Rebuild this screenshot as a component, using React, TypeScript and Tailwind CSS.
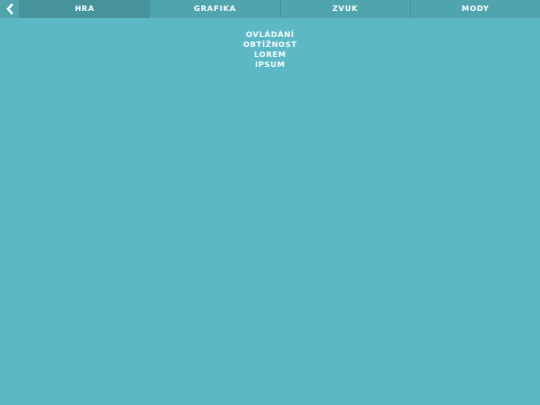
import { useState } from 'react'

const TABS = ['HRA', 'GRAFIKA', 'ZVUK', 'MODY']

const ITEMS = ['OVLÁDÁNÍ', 'OBTÍŽNOST', 'LOREM', 'IPSUM']

export default function App() {
  const [active, setActive] = useState(0)

  return (
    <div className="w-[540px] h-[405px] bg-[#5cb8c5] flex flex-col text-[#eef8fa] font-['DejaVu_Sans',sans-serif]">
      {/* Top bar */}
      <div className="flex h-[18px] bg-[#50a4ae]">
        <button className="w-[19px] flex items-center justify-center">
          <svg width="8" height="12" viewBox="0 0 8 12">
            <path d="M6.5 1 L2 6 L6.5 11" fill="none" stroke="#eef8fa" strokeWidth="2.6" strokeLinejoin="miter" />
          </svg>
        </button>
        <div className="flex-1 grid grid-cols-4">
          {TABS.map((tab, i) => (
            <button
              key={tab}
              onClick={() => setActive(i)}
              className={`flex items-center justify-center text-[7.5px] font-bold tracking-[0.7px] border-l border-[#46949d] ${
                i === active ? 'bg-[#46939c]' : 'bg-[#50a4ae]'
              }`}
            >
              {tab}
            </button>
          ))}
        </div>
      </div>

      {/* Menu */}
      <div className="flex flex-col items-center pt-[12px]">
        {ITEMS.map(item => (
          <div key={item} className="text-[7.5px] font-bold leading-[10px] tracking-[0.6px]">
            {item}
          </div>
        ))}
      </div>
    </div>
  )
}
